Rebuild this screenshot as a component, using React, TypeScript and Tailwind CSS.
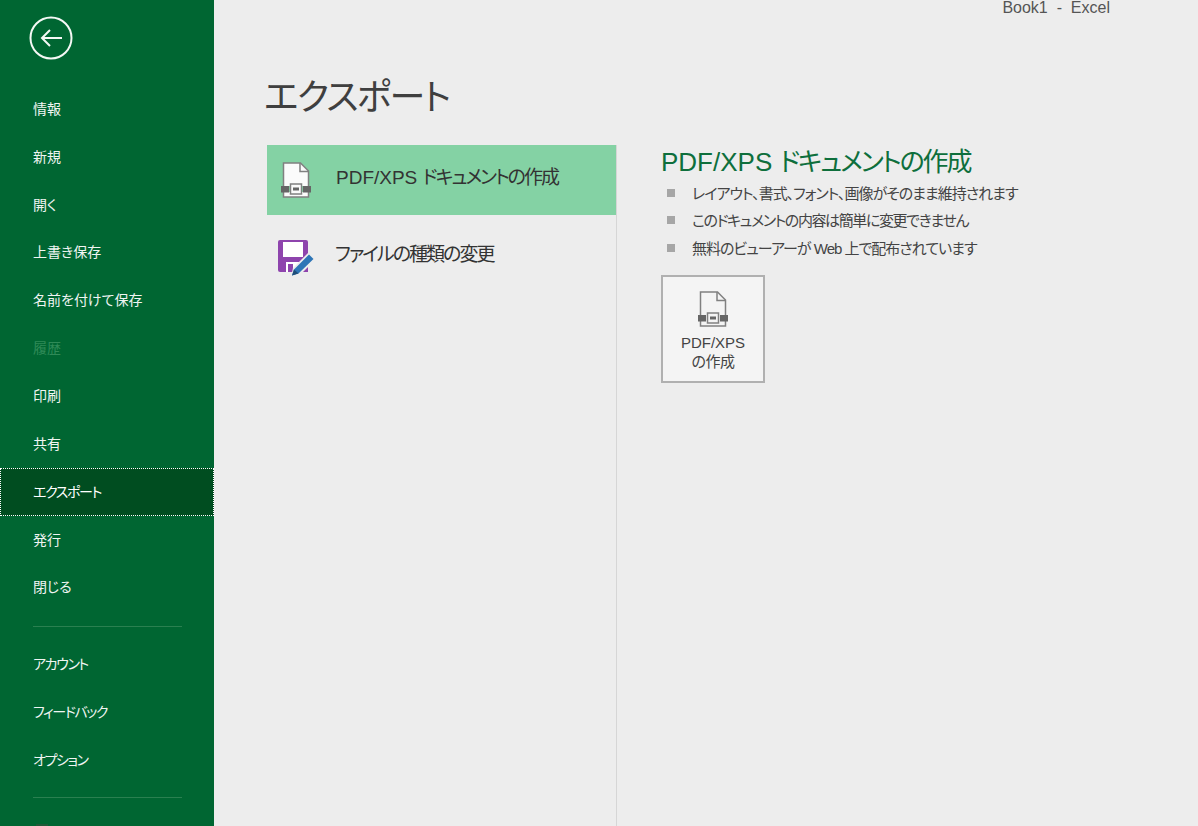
const jp = "font-['Liberation_Sans','Noto_Sans_CJK_JP',sans-serif] [font-feature-settings:'palt']";

const topItems = ['情報', '新規', '開く', '上書き保存', '名前を付けて保存', '履歴', '印刷', '共有', 'エクスポート', '発行', '閉じる'];
const bottomItems = ['アカウント', 'フィードバック', 'オプション'];
const kanaItems = ['エクスポート', 'アカウント', 'フィードバック', 'オプション'];
const points = [
  { text: 'レイアウト、書式、フォント、画像がそのまま維持されます', tracking: 'tracking-[-1px]' },
  { text: 'このドキュメントの内容は簡単に変更できません', tracking: 'tracking-[-1.400px]' },
  { text: '無料のビューアーが Web 上で配布されています', tracking: 'tracking-[-1px]' },
];

const PdfIcon = ({ fill }: { fill: string }) => (
  <svg viewBox="0 0 30 36" className="w-[30px] h-9 shrink-0" fill="none">
    <path d="M2.500 24V1h17l8 8v15z" fill={fill} />
    <path d="M2.500 30v5h25v-5z" fill={fill} />
    <path d="M2.500 24V1h17l8 8v15M2.500 30v5h25v-5" stroke="#808080" strokeWidth="1.500" />
    <path d="M19 1v8.500h8.500" stroke="#808080" strokeWidth="1.500" />
    <rect x="0" y="24" width="8" height="6.500" fill="#666" />
    <rect x="22" y="24" width="8" height="6.500" fill="#666" />
    <rect x="9.500" y="22" width="11" height="10" fill={fill} stroke="#808080" strokeWidth="1.500" />
    <rect x="12" y="25.500" width="6" height="3" fill="#666" />
  </svg>
);

const SaveIcon = () => (
  <svg viewBox="0 0 38 37" className="w-[38px] h-[37px] shrink-0 mt-[7px]">
    <path d="M0 2a2 2 0 0 1 2-2h26a2 2 0 0 1 2 2v30H2a2 2 0 0 1-2-2z" fill="#8e44ad" />
    <rect x="5" y="2" width="20" height="15" fill="#fff" />
    <path d="M8 32V22h13v10z" fill="#fff" />
    <rect x="10" y="24" width="5" height="8" fill="#8e44ad" />
    <path d="M13 37l2-9L31 12l7 7-16 16z" fill="#ededed" />
    <path d="M14 35.500l2-6 15-15 4.500 4.500L20.500 33.500z" fill="#2e75b6" />
    <path d="M14 35.500l2-6 4.500 4z" fill="#1f4e79" />
  </svg>
);

const NavItem = ({ label }: { label: string }) => {
  const active = label === 'エクスポート';
  const disabled = label === '履歴';
  return (
    <div
      className={`h-[47.85px] shrink-0 flex items-center text-[14px] ${kanaItems.includes(label) ? 'tracking-[-1.400px]' : ''} ${
        active
          ? 'bg-[#004d20] border border-dotted border-white pl-[32px] text-white'
          : disabled
            ? 'pl-[33px] text-[#2f8a57]'
            : 'pl-[33px] text-[#f0f5f2]'
      }`}
    >
      {label}
    </div>
  );
};

export default function App() {
  return (
    <div className={`${jp} w-[1198px] h-[826px] overflow-hidden flex bg-[#ededed] text-[#444]`}>
      <aside className="w-[214px] h-full shrink-0 bg-[#006632] flex flex-col overflow-hidden">
        <div className="h-[85.5px] shrink-0 pl-[29px] pt-[16px]">
          <svg viewBox="0 0 44 44" className="w-11 h-11" fill="none" stroke="#f4f8f5">
            <circle cx="22" cy="22" r="20.500" strokeWidth="2" />
            <path d="M13 22h20M21 14l-8 8 8 8" strokeWidth="2" />
          </svg>
        </div>
        {topItems.map((item) => (
          <NavItem key={item} label={item} />
        ))}
        <div className="h-px shrink-0 ml-[33px] w-[149px] mt-[14px] mb-[14px] bg-[#2a8050]" />
        {bottomItems.map((item) => (
          <NavItem key={item} label={item} />
        ))}
        <div className="h-px shrink-0 ml-[33px] w-[149px] mt-[13px] bg-[#2a8050]" />
        <div className="h-3 w-3 shrink-0 ml-[36px] mt-[26px] bg-[#1f5a38]" />
      </aside>

      <main className="flex-1 flex flex-col min-w-0">
        <div className="h-4 flex justify-end pr-[88px] text-[16px] leading-[15px] text-[#555] whitespace-pre">Book1  -  Excel</div>
        <h1 className="ml-[50px] mt-[57px] h-[72px] text-[36px] leading-[50px] tracking-[-1.800px] font-normal text-[#3f3f3f]">エクスポート</h1>
        <div className="flex-1 flex ml-[53px]">
          <div className="w-[350px] border-r border-[#d6d6d6]">
            <div className="h-[70px] bg-[#84d2a4] flex items-center pl-[14px] gap-[25px] text-[19px] text-[#333]">
              <PdfIcon fill="#fbfbfb" />
              <span className="-mt-[3px]">
                PDF/XPS <span className="tracking-[-2px]">ドキュメントの作成</span>
              </span>
            </div>
            <div className="h-[80px] flex items-center pl-[11px] gap-[19px] text-[19px] tracking-[-2px] text-[#333]">
              <SaveIcon />
              <span>ファイルの種類の変更</span>
            </div>
          </div>
          <div className="pl-[44px] flex flex-col items-start">
            <h2 className="mt-[1px] text-[26px] leading-[32px] font-normal text-[#0e6f3c]">
              PDF/XPS <span className="tracking-[-2.100px]">ドキュメントの作成</span>
            </h2>
            <ul className="mt-[2px] flex flex-col">
              {points.map((point) => (
                <li key={point.text} className={`h-[27.500px] flex items-center pl-[6px] gap-[17px] text-[15px] text-[#444] ${point.tracking}`}>
                  <span className="w-2 h-2 bg-[#a6a6a6] shrink-0 -mt-[2px]" />
                  <span>{point.text}</span>
                </li>
              ))}
            </ul>
            <button className="mt-[12px] w-[104px] h-[108px] border-2 border-[#b0b0b0] bg-[#f4f4f4] flex flex-col items-center pt-[14px] text-[15px] leading-[19px] text-[#444]">
              <PdfIcon fill="#f4f4f4" />
              <span className="mt-[6px]">PDF/XPS</span>
              <span className="tracking-[-0.500px]">の作成</span>
            </button>
          </div>
        </div>
      </main>
    </div>
  );
}
